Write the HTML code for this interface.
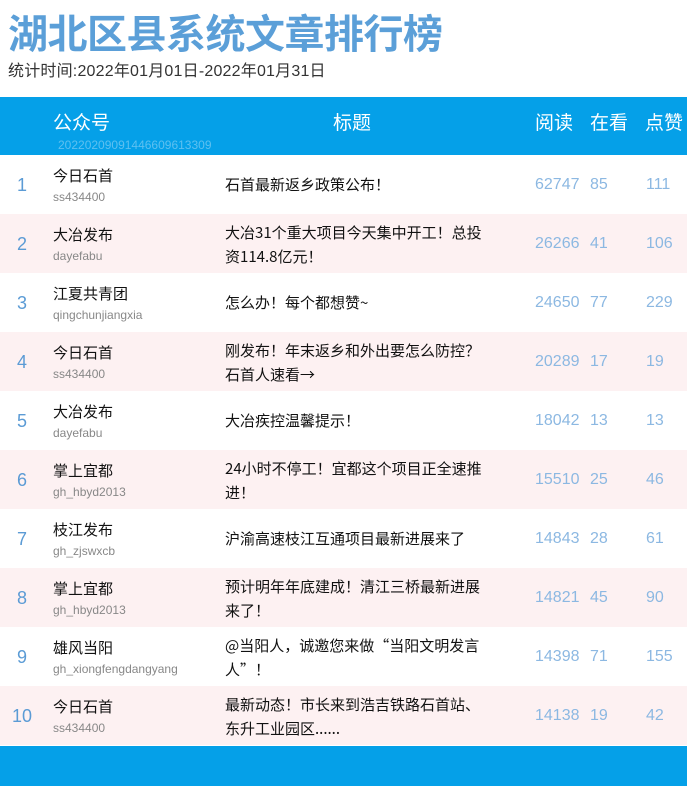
<!DOCTYPE html>
<html><head><meta charset="utf-8"><style>
*{margin:0;padding:0;box-sizing:border-box}
body{width:687px;height:786px;overflow:hidden;background:#fff;font-family:"Liberation Sans","Noto Sans CJK SC",sans-serif;position:relative}
h1{position:absolute;left:8px;top:10px;font-size:40px;font-weight:bold;color:#5b9fd8;line-height:50px;white-space:nowrap;letter-spacing:-0.5px}
.sub{position:absolute;left:8px;top:61px;font-size:16px;color:#333;line-height:22px;letter-spacing:0.2px}
.hd{position:absolute;left:0;top:97px;width:687px;height:58px;background:#05a0e8;color:#fff;font-size:19px}
.hd span{position:absolute;top:14px;line-height:26px}
.hd .code{top:41px;font-size:12px;color:#5ec0f0;line-height:14px;left:58px}
.row{position:absolute;left:0;width:687px;height:59px}
.row.p{background:#fdf1f2}
.rk{position:absolute;left:0;width:44px;text-align:center;top:19px;font-size:18px;color:#5b9bd5;line-height:22px}
.nm{position:absolute;left:53px;top:11px;font-size:15px;color:#111;line-height:22px}
.id{position:absolute;left:53px;top:34px;font-size:12px;color:#888;line-height:16px}
.tt{position:absolute;left:225px;width:300px;font-size:15px;color:#111;line-height:24px;font-family:"Noto Sans CJK SC",sans-serif;white-space:nowrap}
.n{position:absolute;top:19px;font-size:16px;color:#8cb8e2;line-height:22px}
.ft{position:absolute;left:0;top:746px;width:687px;height:40px;background:#05a0e8}
</style></head><body>
<h1>湖北区县系统文章排行榜</h1>
<div class="sub">统计时间:2022年01月01日-2022年01月31日</div>
<div class="hd"><span style="left:53px">公众号</span><span style="left:333px">标题</span><span style="left:535px">阅读</span><span style="left:590px">在看</span><span style="left:645px">点赞</span><span class="code">20220209091446609613309</span></div>

<div class="row" style="top:155px"><div class="rk">1</div><div class="nm">今日石首</div><div class="id">ss434400</div><div class="tt" style="top:18px">石首最新返乡政策公布！</div><div class="n" style="left:535px">62747</div><div class="n" style="left:590px">85</div><div class="n" style="left:646px">111</div></div>
<div class="row p" style="top:214px"><div class="rk">2</div><div class="nm">大冶发布</div><div class="id">dayefabu</div><div class="tt" style="top:7px">大冶31个重大项目今天集中开工！总投<br>资114.8亿元！</div><div class="n" style="left:535px">26266</div><div class="n" style="left:590px">41</div><div class="n" style="left:646px">106</div></div>
<div class="row" style="top:273px"><div class="rk">3</div><div class="nm">江夏共青团</div><div class="id">qingchunjiangxia</div><div class="tt" style="top:18px">怎么办！每个都想赞~</div><div class="n" style="left:535px">24650</div><div class="n" style="left:590px">77</div><div class="n" style="left:646px">229</div></div>
<div class="row p" style="top:332px"><div class="rk">4</div><div class="nm">今日石首</div><div class="id">ss434400</div><div class="tt" style="top:7px">刚发布！年末返乡和外出要怎么防控？<br>石首人速看→</div><div class="n" style="left:535px">20289</div><div class="n" style="left:590px">17</div><div class="n" style="left:646px">19</div></div>
<div class="row" style="top:391px"><div class="rk">5</div><div class="nm">大冶发布</div><div class="id">dayefabu</div><div class="tt" style="top:18px">大冶疾控温馨提示！</div><div class="n" style="left:535px">18042</div><div class="n" style="left:590px">13</div><div class="n" style="left:646px">13</div></div>
<div class="row p" style="top:450px"><div class="rk">6</div><div class="nm">掌上宜都</div><div class="id">gh_hbyd2013</div><div class="tt" style="top:7px">24小时不停工！宜都这个项目正全速推<br>进！</div><div class="n" style="left:535px">15510</div><div class="n" style="left:590px">25</div><div class="n" style="left:646px">46</div></div>
<div class="row" style="top:509px"><div class="rk">7</div><div class="nm">枝江发布</div><div class="id">gh_zjswxcb</div><div class="tt" style="top:18px">沪渝高速枝江互通项目最新进展来了</div><div class="n" style="left:535px">14843</div><div class="n" style="left:590px">28</div><div class="n" style="left:646px">61</div></div>
<div class="row p" style="top:568px"><div class="rk">8</div><div class="nm">掌上宜都</div><div class="id">gh_hbyd2013</div><div class="tt" style="top:7px">预计明年年底建成！清江三桥最新进展<br>来了！</div><div class="n" style="left:535px">14821</div><div class="n" style="left:590px">45</div><div class="n" style="left:646px">90</div></div>
<div class="row" style="top:627px"><div class="rk">9</div><div class="nm">雄风当阳</div><div class="id">gh_xiongfengdangyang</div><div class="tt" style="top:7px">@当阳人，诚邀您来做“当阳文明发言<br>人”！</div><div class="n" style="left:535px">14398</div><div class="n" style="left:590px">71</div><div class="n" style="left:646px">155</div></div>
<div class="row p" style="top:686px"><div class="rk">10</div><div class="nm">今日石首</div><div class="id">ss434400</div><div class="tt" style="top:7px">最新动态！市长来到浩吉铁路石首站、<br>东升工业园区......</div><div class="n" style="left:535px">14138</div><div class="n" style="left:590px">19</div><div class="n" style="left:646px">42</div></div>
<div class="ft"></div>
</body></html>
